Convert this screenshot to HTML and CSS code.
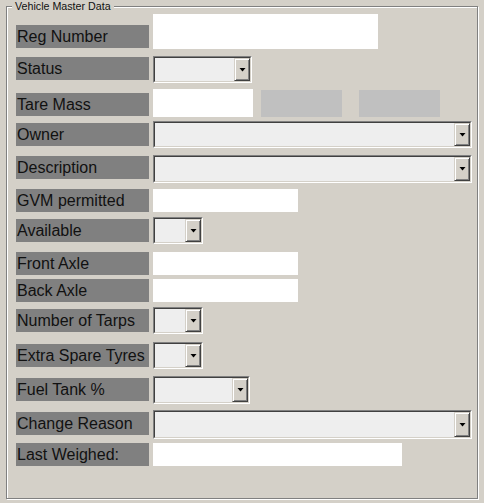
FILE: index.html
```html
<!DOCTYPE html>
<html>
<head>
<meta charset="utf-8">
<link rel="stylesheet" href="styles.css">
</head>
<body>
<fieldset class="group">
  <legend class="group-title">Vehicle Master Data</legend>

  <div class="row end">
    <div class="lbl">Reg Number</div>
    <div class="txt t-reg"></div>
  </div>

  <div class="row sp9">
    <div class="lbl">Status</div>
    <div class="sel s-status"><div class="sel-in"><div class="face"></div><div class="btn"><svg width="7" height="4" viewBox="0 0 7 4"><polygon points="0.5,0 6.5,0 3.5,3.5" fill="#000"/></svg></div></div></div>
  </div>

  <div class="row sp13 end">
    <div class="lbl">Tare Mass</div>
    <div class="txt t-tare"></div>
    <div class="ghost g1"></div>
    <div class="ghost g2"></div>
  </div>

  <div class="row sp7">
    <div class="lbl">Owner</div>
    <div class="sel s-wide"><div class="sel-in"><div class="face"></div><div class="btn"><svg width="7" height="4" viewBox="0 0 7 4"><polygon points="0.5,0 6.5,0 3.5,3.5" fill="#000"/></svg></div></div></div>
  </div>

  <div class="row sp10">
    <div class="lbl">Description</div>
    <div class="sel s-wide s-desc"><div class="sel-in"><div class="face"></div><div class="btn"><svg width="7" height="4" viewBox="0 0 7 4"><polygon points="0.5,0 6.5,0 3.5,3.5" fill="#000"/></svg></div></div></div>
  </div>

  <div class="row sp10">
    <div class="lbl">GVM permitted</div>
    <div class="txt t-mid"></div>
  </div>

  <div class="row sp7">
    <div class="lbl">Available</div>
    <div class="sel s-small"><div class="sel-in"><div class="face"></div><div class="btn"><svg width="7" height="4" viewBox="0 0 7 4"><polygon points="0.5,0 6.5,0 3.5,3.5" fill="#000"/></svg></div></div></div>
  </div>

  <div class="row sp10">
    <div class="lbl">Front Axle</div>
    <div class="txt t-mid"></div>
  </div>

  <div class="row sp4">
    <div class="lbl">Back Axle</div>
    <div class="txt t-mid"></div>
  </div>

  <div class="row sp7">
    <div class="lbl">Number of Tarps</div>
    <div class="sel s-small"><div class="sel-in"><div class="face"></div><div class="btn"><svg width="7" height="4" viewBox="0 0 7 4"><polygon points="0.5,0 6.5,0 3.5,3.5" fill="#000"/></svg></div></div></div>
  </div>

  <div class="row sp12">
    <div class="lbl">Extra Spare Tyres</div>
    <div class="sel s-small"><div class="sel-in"><div class="face"></div><div class="btn"><svg width="7" height="4" viewBox="0 0 7 4"><polygon points="0.5,0 6.5,0 3.5,3.5" fill="#000"/></svg></div></div></div>
  </div>

  <div class="row sp11">
    <div class="lbl">Fuel Tank %</div>
    <div class="sel s-fuel"><div class="sel-in"><div class="face"></div><div class="btn"><svg width="7" height="4" viewBox="0 0 7 4"><polygon points="0.5,0 6.5,0 3.5,3.5" fill="#000"/></svg></div></div></div>
  </div>

  <div class="row sp11">
    <div class="lbl">Change Reason</div>
    <div class="sel s-wide s-change"><div class="sel-in"><div class="face"></div><div class="btn"><svg width="7" height="4" viewBox="0 0 7 4"><polygon points="0.5,0 6.5,0 3.5,3.5" fill="#000"/></svg></div></div></div>
  </div>

  <div class="row sp8">
    <div class="lbl">Last Weighed:</div>
    <div class="txt t-last"></div>
  </div>
</fieldset>
</body>
</html>
```
FILE: styles.css
```css
* { box-sizing: border-box; }

html, body {
  margin: 0;
  padding: 0;
  background: #d4d0c8;
}

body {
  width: 484px;
  height: 503px;
  padding-left: 6px;
  overflow: hidden;
  font-family: "Liberation Sans", Arial, sans-serif;
  color: #111;
}

.group {
  margin: 0;
  width: 472px;
  height: 499px;
  padding: 13px 0 0 9px;
  border: 1px solid #808080;
  box-shadow: inset 1px 1px 0 #fff, 1px 1px 0 #fff;
  min-width: 0;
}

.group-title {
  margin-left: -4px;
  padding: 0 3px;
  font-size: 10.7px;
  line-height: 12px;
  color: #111;
  background: #d4d0c8;
}

.row {
  display: flex;
  align-items: flex-start;
  height: 23px;
}
.row.end { align-items: flex-end; }

.sp4 { margin-top: 4px; }
.sp7 { margin-top: 7px; }
.sp8 { margin-top: 8px; }
.sp9 { margin-top: 9px; }
.sp10 { margin-top: 10px; }
.sp11 { margin-top: 11px; }
.sp12 { margin-top: 12px; }
.sp13 { margin-top: 13px; }

.lbl {
  flex: none;
  width: 133px;
  height: 23px;
  margin-right: 4px;
  padding-left: 1px;
  background: #808080;
  font-size: 16px;
  line-height: 23px;
  white-space: nowrap;
  overflow: hidden;
}

.txt {
  flex: none;
  background: #fff;
  height: 23px;
}
.t-reg { width: 225px; height: 35px; margin-bottom: -1px; }
.t-tare { width: 100px; height: 28px; margin-bottom: -1px; }
.t-mid { width: 145px; }
.t-last { width: 249px; }

.ghost {
  flex: none;
  width: 81px;
  height: 27px;
  margin-bottom: -1px;
  background: #c0c0c0;
}
.g1 { margin-left: 8px; }
.g2 { margin-left: 17px; }

.sel {
  flex: none;
  display: flex;
  height: 27px;
  margin-top: -2px;
  border: 1px solid;
  border-color: #808080 #fff #fff #808080;
}
.sel-in {
  flex: 1;
  display: flex;
  border: 1px solid;
  border-color: #404040 #d4d0c8 #d4d0c8 #404040;
  background: #eeeeee;
}
.face { flex: 1; }
.btn {
  flex: none;
  width: 16px;
  display: flex;
  align-items: center;
  justify-content: center;
  background: #d4d0c8;
  border: 1px solid;
  border-color: #d4d0c8 #404040 #404040 #d4d0c8;
  box-shadow: inset 1px 1px 0 #fff, inset -1px -1px 0 #808080;
}
.btn svg { display: block; }

.s-status { width: 99px; margin-top: -1px; }
.s-small { width: 50px; }
.s-wide { width: 319px; }
.s-desc { height: 28px; margin-top: -1px; }
.s-fuel { width: 97px; height: 28px; }
.s-change { height: 29px; }
```
